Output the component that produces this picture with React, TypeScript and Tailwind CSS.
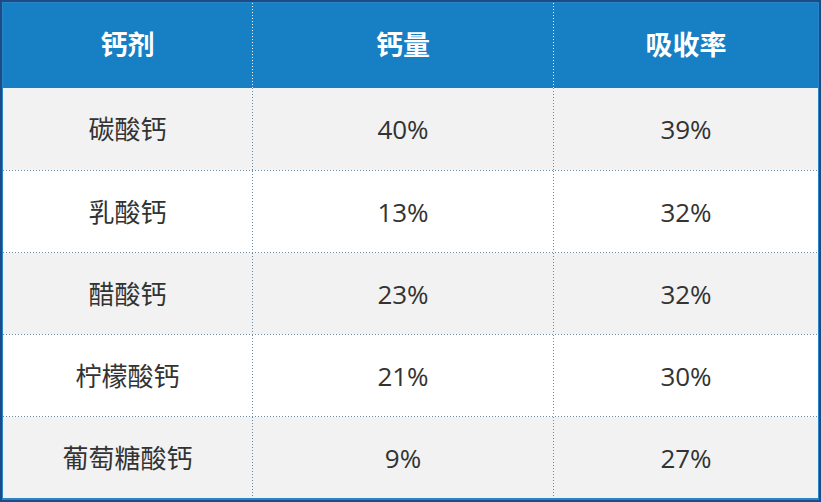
import React from 'react';

const rows = [
  { name: '碳酸钙', amount: '40%', rate: '39%' },
  { name: '乳酸钙', amount: '13%', rate: '32%' },
  { name: '醋酸钙', amount: '23%', rate: '32%' },
  { name: '柠檬酸钙', amount: '21%', rate: '30%' },
  { name: '葡萄糖酸钙', amount: '9%', rate: '27%' },
];

const font = "font-['Open_Sans','Noto_Sans_CJK_SC',sans-serif]";

// dotted rules drawn with a gradient so the dot spacing matches (1px dot, 2px gap)
const vDot = 'w-px bg-[repeating-linear-gradient(to_bottom,#6a8aa4_0_1px,transparent_1px_3px)]';
const vDotWhite = 'w-px bg-[repeating-linear-gradient(to_bottom,#ffffff_0_1px,transparent_1px_3px)]';
const hDot = 'h-px bg-[repeating-linear-gradient(to_right,#6a8aa4_0_1px,transparent_1px_3px)]';

export default function App() {
  return (
    <div className={`w-[821px] h-[502px] bg-white ${font}`}>
      <div className="w-full h-full border-2 border-[#1d4c84]">
        <div className="w-full h-full border border-b-2 border-[#2a84c8] bg-white">
          <div className="grid grid-cols-[249px_1px_300px_1px_1fr] h-[85px] bg-[#1780c4] text-white font-bold text-[27px]">
            <div className="flex items-center justify-center">钙剂</div>
            <div className={vDotWhite} />
            <div className="flex items-center justify-center">钙量</div>
            <div className={vDotWhite} />
            <div className="flex items-center justify-center">吸收率</div>
          </div>
          {rows.map((r, i) => (
            <React.Fragment key={r.name}>
              {i > 0 && <div className={hDot} />}
              <div
                className={`grid grid-cols-[249px_1px_300px_1px_1fr] ${i > 0 ? 'h-[81px]' : 'h-[82px]'} text-[26px] text-[#333333] ${
                  i % 2 === 0 ? 'bg-[#f2f2f2]' : 'bg-white'
                }`}
              >
                <div className="flex items-center justify-center pt-px">{r.name}</div>
                <div className={vDot} />
                <div className="flex items-center justify-center pt-px">{r.amount}</div>
                <div className={vDot} />
                <div className="flex items-center justify-center pt-px">{r.rate}</div>
              </div>
            </React.Fragment>
          ))}
        </div>
      </div>
    </div>
  );
}
